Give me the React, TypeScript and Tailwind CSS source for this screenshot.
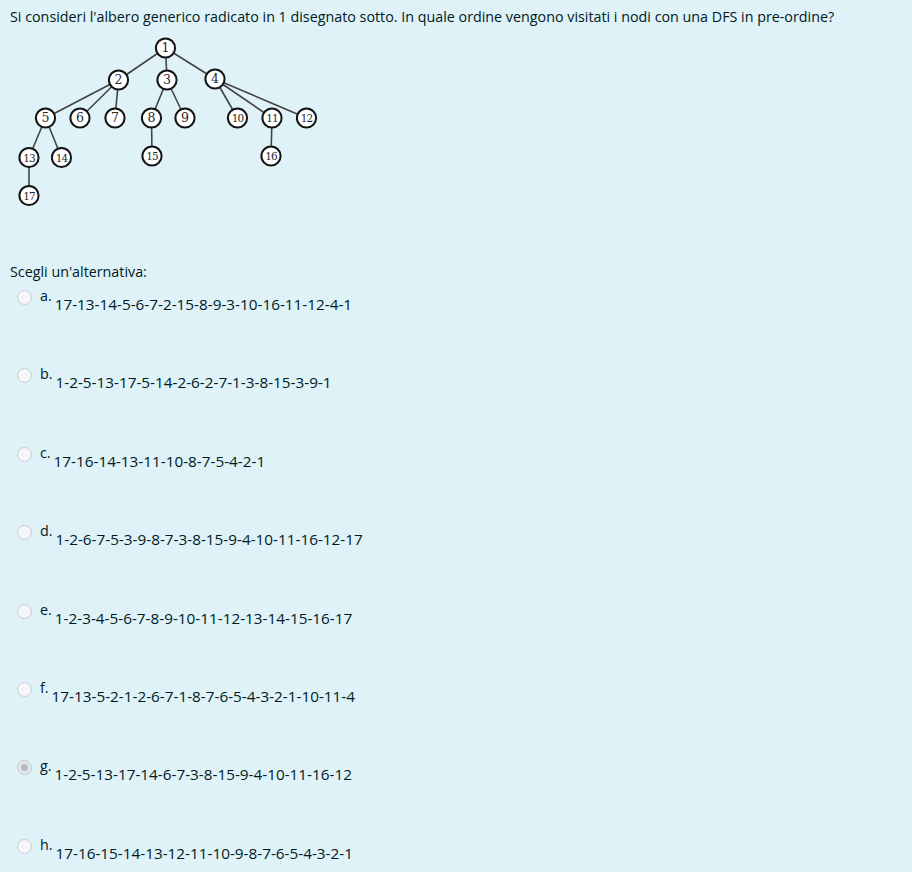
const nodes: [number, number, number][] = [
  [1, 165.5, 48],
  [2, 118.5, 80],
  [3, 167, 80],
  [4, 215, 79],
  [5, 45.5, 118],
  [6, 80, 118],
  [7, 115, 118],
  [8, 151.5, 118],
  [9, 185, 118],
  [10, 237.5, 118],
  [11, 272, 118],
  [12, 306.5, 118],
  [13, 29, 157.5],
  [14, 61.5, 157.5],
  [15, 152, 156],
  [16, 271, 156],
  [17, 29, 195.5],
];

const edges: [number, number][] = [
  [1, 2], [1, 3], [1, 4],
  [2, 5], [2, 6], [2, 7],
  [3, 8], [3, 9],
  [4, 10], [4, 11], [4, 12],
  [5, 13], [5, 14],
  [8, 15], [11, 16], [13, 17],
];

const answers = [
  { key: 'a.', text: '17-13-14-5-6-7-2-15-8-9-3-10-16-11-12-4-1' },
  { key: 'b.', text: '1-2-5-13-17-5-14-2-6-2-7-1-3-8-15-3-9-1' },
  { key: 'c.', text: '17-16-14-13-11-10-8-7-5-4-2-1' },
  { key: 'd.', text: '1-2-6-7-5-3-9-8-7-3-8-15-9-4-10-11-16-12-17' },
  { key: 'e.', text: '1-2-3-4-5-6-7-8-9-10-11-12-13-14-15-16-17' },
  { key: 'f.', text: '17-13-5-2-1-2-6-7-1-8-7-6-5-4-3-2-1-10-11-4' },
  { key: 'g.', text: '1-2-5-13-17-14-6-7-3-8-15-9-4-10-11-16-12', checked: true },
  { key: 'h.', text: '17-16-15-14-13-12-11-10-9-8-7-6-5-4-3-2-1' },
];

// svg sits at page x=10, y=34
const OX = 10;
const OY = 34;

const Tree = () => {
  const pos = (id: number) => {
    const n = nodes.find((x) => x[0] === id)!;
    return { x: n[1] - OX, y: n[2] - OY };
  };
  return (
    <svg width="320" height="180" viewBox="0 0 320 180" className="mt-[7px] block overflow-visible">
      {edges.map(([a, b]) => {
        const p = pos(a);
        const q = pos(b);
        return (
          <line key={`${a}-${b}`} x1={p.x} y1={p.y} x2={q.x} y2={q.y} stroke="#444444" strokeWidth="1.6" />
        );
      })}
      {nodes.map(([id]) => {
        const p = pos(id);
        return (
          <g key={id}>
            <circle cx={p.x} cy={p.y} r="9.6" fill="#ffffff" stroke="#141414" strokeWidth="2" />
            <text
              x={p.x}
              y={p.y + 4.2}
              textAnchor="middle"
              fontFamily="'DejaVu Serif', 'Liberation Serif', serif"
              fontSize={id > 9 ? 10.5 : 12.5}
              letterSpacing={id > 9 ? -1 : 0}
              fill="#2a2a2a"
            >
              {id}
            </text>
          </g>
        );
      })}
    </svg>
  );
};

const Radio = ({ checked }: { checked?: boolean }) => (
  <span
    className={`mt-[4px] flex h-[15px] w-[15px] shrink-0 items-center justify-center rounded-full border ${
      checked ? 'border-[#c4c8cc] bg-[#e4e7ea]' : 'border-[#c9cdd1] bg-[#f4f6f8]'
    }`}
  >
    {checked && <span className="h-[7px] w-[7px] rounded-full bg-[#b5babf]" />}
  </span>
);

export default function App() {
  return (
    <div
      className="min-h-screen w-full bg-[#def2f8] px-[10px] text-[#001a1e]"
      style={{ fontFamily: "'Open Sans', 'Noto Sans', sans-serif" }}
    >
      <p className="pt-[6px] text-[14.3px] leading-[21px]">
        Si consideri l'albero generico radicato in 1 disegnato sotto. In quale ordine vengono visitati i nodi con una DFS in pre-ordine?
      </p>
      <Tree />
      <p className="mt-[47px] text-[14.3px] leading-[21px]">Scegli un'alternativa:</p>
      <div className="mt-[4px] flex flex-col">
        {answers.map((a) => (
          <div key={a.key} className="flex h-[78.4px] items-start pl-[7px]">
            <Radio checked={a.checked} />
            <span className="ml-[8px] text-[14.3px] leading-[20px]">{a.key}</span>
            <span className="ml-[3px] pt-[8px] text-[15.3px] leading-[21px]">{a.text}</span>
          </div>
        ))}
      </div>
    </div>
  );
}
